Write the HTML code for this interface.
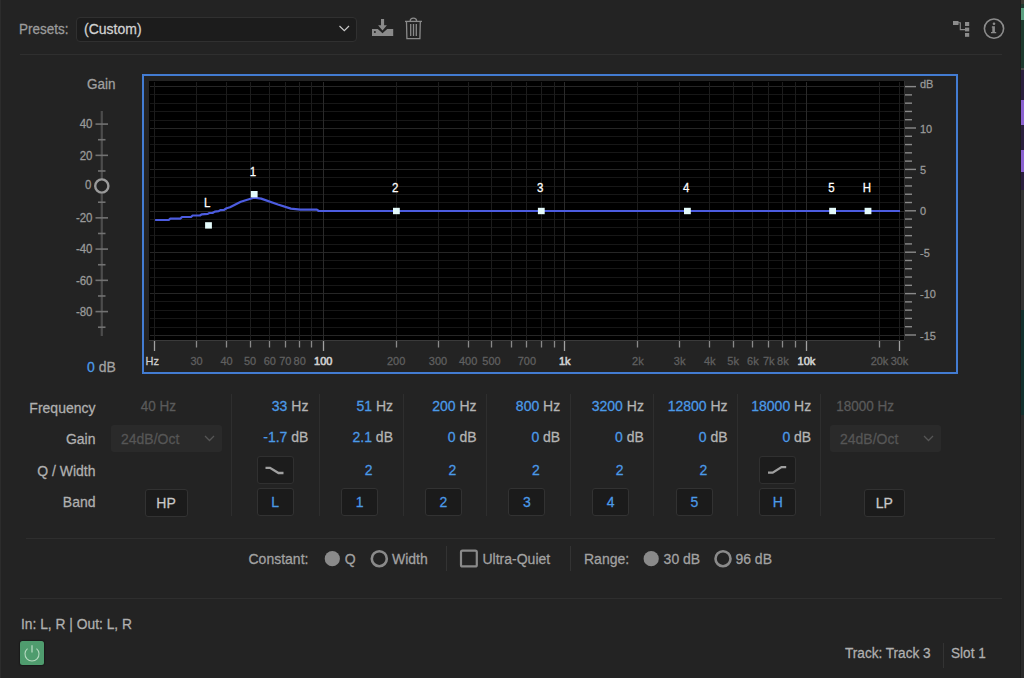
<!DOCTYPE html>
<html><head><meta charset="utf-8"><style>
html,body{margin:0;padding:0;}
body{width:1024px;height:678px;background:#232323;position:relative;overflow:hidden;font-family:"Liberation Sans", sans-serif;}
.t{position:absolute;white-space:nowrap;-webkit-text-stroke:0.25px currentColor;transform:scaleY(1.07);}
svg{position:absolute;left:0;top:0;}
</style></head><body>
<svg width="1024" height="678" viewBox="0 0 1024 678"><rect x="143" y="75" width="814" height="298" fill="none" stroke="#437cd2" stroke-width="2"/><rect x="149" y="81" width="755" height="259.5" fill="#000"/><rect x="149" y="340" width="755" height="1" fill="#3a3a3a"/><line x1="150" x2="904" y1="86.5" y2="86.5" stroke="#262626" stroke-width="1"/><line x1="150" x2="904" y1="94.5" y2="94.5" stroke="#171717" stroke-width="1"/><line x1="150" x2="904" y1="103.5" y2="103.5" stroke="#171717" stroke-width="1"/><line x1="150" x2="904" y1="111.5" y2="111.5" stroke="#171717" stroke-width="1"/><line x1="150" x2="904" y1="120.5" y2="120.5" stroke="#171717" stroke-width="1"/><line x1="150" x2="904" y1="128.5" y2="128.5" stroke="#262626" stroke-width="1"/><line x1="150" x2="904" y1="136.5" y2="136.5" stroke="#171717" stroke-width="1"/><line x1="150" x2="904" y1="144.5" y2="144.5" stroke="#171717" stroke-width="1"/><line x1="150" x2="904" y1="152.5" y2="152.5" stroke="#171717" stroke-width="1"/><line x1="150" x2="904" y1="161.5" y2="161.5" stroke="#171717" stroke-width="1"/><line x1="150" x2="904" y1="169.5" y2="169.5" stroke="#262626" stroke-width="1"/><line x1="150" x2="904" y1="177.5" y2="177.5" stroke="#171717" stroke-width="1"/><line x1="150" x2="904" y1="186.5" y2="186.5" stroke="#171717" stroke-width="1"/><line x1="150" x2="904" y1="194.5" y2="194.5" stroke="#171717" stroke-width="1"/><line x1="150" x2="904" y1="202.5" y2="202.5" stroke="#171717" stroke-width="1"/><line x1="150" x2="904" y1="211.5" y2="211.5" stroke="#262626" stroke-width="1"/><line x1="150" x2="904" y1="219.5" y2="219.5" stroke="#171717" stroke-width="1"/><line x1="150" x2="904" y1="227.5" y2="227.5" stroke="#171717" stroke-width="1"/><line x1="150" x2="904" y1="235.5" y2="235.5" stroke="#171717" stroke-width="1"/><line x1="150" x2="904" y1="244.5" y2="244.5" stroke="#171717" stroke-width="1"/><line x1="150" x2="904" y1="252.5" y2="252.5" stroke="#262626" stroke-width="1"/><line x1="150" x2="904" y1="260.5" y2="260.5" stroke="#171717" stroke-width="1"/><line x1="150" x2="904" y1="268.5" y2="268.5" stroke="#171717" stroke-width="1"/><line x1="150" x2="904" y1="277.5" y2="277.5" stroke="#171717" stroke-width="1"/><line x1="150" x2="904" y1="285.5" y2="285.5" stroke="#171717" stroke-width="1"/><line x1="150" x2="904" y1="293.5" y2="293.5" stroke="#262626" stroke-width="1"/><line x1="150" x2="904" y1="301.5" y2="301.5" stroke="#171717" stroke-width="1"/><line x1="150" x2="904" y1="310.5" y2="310.5" stroke="#171717" stroke-width="1"/><line x1="150" x2="904" y1="318.5" y2="318.5" stroke="#171717" stroke-width="1"/><line x1="150" x2="904" y1="327.5" y2="327.5" stroke="#171717" stroke-width="1"/><line x1="150" x2="904" y1="335.5" y2="335.5" stroke="#262626" stroke-width="1"/><line x1="154.5" x2="154.5" y1="82" y2="340" stroke="#1c1c1c" stroke-width="1"/><line x1="196.5" x2="196.5" y1="82" y2="340" stroke="#1c1c1c" stroke-width="1"/><line x1="226.5" x2="226.5" y1="82" y2="340" stroke="#1c1c1c" stroke-width="1"/><line x1="250.5" x2="250.5" y1="82" y2="340" stroke="#1c1c1c" stroke-width="1"/><line x1="269.5" x2="269.5" y1="82" y2="340" stroke="#1c1c1c" stroke-width="1"/><line x1="285.5" x2="285.5" y1="82" y2="340" stroke="#1c1c1c" stroke-width="1"/><line x1="299.5" x2="299.5" y1="82" y2="340" stroke="#1c1c1c" stroke-width="1"/><line x1="311.5" x2="311.5" y1="82" y2="340" stroke="#1c1c1c" stroke-width="1"/><line x1="323.5" x2="323.5" y1="82" y2="340" stroke="#2a2a2a" stroke-width="1"/><line x1="396.5" x2="396.5" y1="82" y2="340" stroke="#1c1c1c" stroke-width="1"/><line x1="438.5" x2="438.5" y1="82" y2="340" stroke="#1c1c1c" stroke-width="1"/><line x1="468.5" x2="468.5" y1="82" y2="340" stroke="#1c1c1c" stroke-width="1"/><line x1="491.5" x2="491.5" y1="82" y2="340" stroke="#1c1c1c" stroke-width="1"/><line x1="511.5" x2="511.5" y1="82" y2="340" stroke="#1c1c1c" stroke-width="1"/><line x1="526.5" x2="526.5" y1="82" y2="340" stroke="#1c1c1c" stroke-width="1"/><line x1="541.5" x2="541.5" y1="82" y2="340" stroke="#1c1c1c" stroke-width="1"/><line x1="554.5" x2="554.5" y1="82" y2="340" stroke="#1c1c1c" stroke-width="1"/><line x1="564.5" x2="564.5" y1="82" y2="340" stroke="#2a2a2a" stroke-width="1"/><line x1="637.5" x2="637.5" y1="82" y2="340" stroke="#1c1c1c" stroke-width="1"/><line x1="679.5" x2="679.5" y1="82" y2="340" stroke="#1c1c1c" stroke-width="1"/><line x1="709.5" x2="709.5" y1="82" y2="340" stroke="#1c1c1c" stroke-width="1"/><line x1="733.5" x2="733.5" y1="82" y2="340" stroke="#1c1c1c" stroke-width="1"/><line x1="752.5" x2="752.5" y1="82" y2="340" stroke="#1c1c1c" stroke-width="1"/><line x1="768.5" x2="768.5" y1="82" y2="340" stroke="#1c1c1c" stroke-width="1"/><line x1="782.5" x2="782.5" y1="82" y2="340" stroke="#1c1c1c" stroke-width="1"/><line x1="795.5" x2="795.5" y1="82" y2="340" stroke="#1c1c1c" stroke-width="1"/><line x1="806.5" x2="806.5" y1="82" y2="340" stroke="#2a2a2a" stroke-width="1"/><line x1="879.5" x2="879.5" y1="82" y2="340" stroke="#1c1c1c" stroke-width="1"/><line x1="899.5" x2="899.5" y1="82" y2="340" stroke="#1c1c1c" stroke-width="1"/><line x1="904.5" x2="904.5" y1="81" y2="340" stroke="#2e2e2e" stroke-width="1"/><line x1="154.5" x2="154.5" y1="341" y2="351" stroke="#a2a2a2" stroke-width="1.3"/><line x1="196.5" x2="196.5" y1="341" y2="347.5" stroke="#8a8a8a" stroke-width="1.3"/><line x1="226.5" x2="226.5" y1="341" y2="347.5" stroke="#8a8a8a" stroke-width="1.3"/><line x1="250.5" x2="250.5" y1="341" y2="347.5" stroke="#8a8a8a" stroke-width="1.3"/><line x1="269.5" x2="269.5" y1="341" y2="347.5" stroke="#8a8a8a" stroke-width="1.3"/><line x1="285.5" x2="285.5" y1="341" y2="347.5" stroke="#8a8a8a" stroke-width="1.3"/><line x1="299.5" x2="299.5" y1="341" y2="347.5" stroke="#8a8a8a" stroke-width="1.3"/><line x1="311.5" x2="311.5" y1="341" y2="347.5" stroke="#8a8a8a" stroke-width="1.3"/><line x1="323.5" x2="323.5" y1="341" y2="351" stroke="#a2a2a2" stroke-width="1.3"/><line x1="396.5" x2="396.5" y1="341" y2="347.5" stroke="#8a8a8a" stroke-width="1.3"/><line x1="438.5" x2="438.5" y1="341" y2="347.5" stroke="#8a8a8a" stroke-width="1.3"/><line x1="468.5" x2="468.5" y1="341" y2="347.5" stroke="#8a8a8a" stroke-width="1.3"/><line x1="491.5" x2="491.5" y1="341" y2="347.5" stroke="#8a8a8a" stroke-width="1.3"/><line x1="511.5" x2="511.5" y1="341" y2="347.5" stroke="#8a8a8a" stroke-width="1.3"/><line x1="526.5" x2="526.5" y1="341" y2="347.5" stroke="#8a8a8a" stroke-width="1.3"/><line x1="541.5" x2="541.5" y1="341" y2="347.5" stroke="#8a8a8a" stroke-width="1.3"/><line x1="554.5" x2="554.5" y1="341" y2="347.5" stroke="#8a8a8a" stroke-width="1.3"/><line x1="564.5" x2="564.5" y1="341" y2="351" stroke="#a2a2a2" stroke-width="1.3"/><line x1="637.5" x2="637.5" y1="341" y2="347.5" stroke="#8a8a8a" stroke-width="1.3"/><line x1="679.5" x2="679.5" y1="341" y2="347.5" stroke="#8a8a8a" stroke-width="1.3"/><line x1="709.5" x2="709.5" y1="341" y2="347.5" stroke="#8a8a8a" stroke-width="1.3"/><line x1="733.5" x2="733.5" y1="341" y2="347.5" stroke="#8a8a8a" stroke-width="1.3"/><line x1="752.5" x2="752.5" y1="341" y2="347.5" stroke="#8a8a8a" stroke-width="1.3"/><line x1="768.5" x2="768.5" y1="341" y2="347.5" stroke="#8a8a8a" stroke-width="1.3"/><line x1="782.5" x2="782.5" y1="341" y2="347.5" stroke="#8a8a8a" stroke-width="1.3"/><line x1="795.5" x2="795.5" y1="341" y2="347.5" stroke="#8a8a8a" stroke-width="1.3"/><line x1="806.5" x2="806.5" y1="341" y2="351" stroke="#a2a2a2" stroke-width="1.3"/><line x1="879.5" x2="879.5" y1="341" y2="347.5" stroke="#8a8a8a" stroke-width="1.3"/><line x1="899.5" x2="899.5" y1="341" y2="351" stroke="#a2a2a2" stroke-width="1.3"/><rect x="905" y="85.90" width="11" height="1.4" fill="#8a8a8a"/><rect x="905" y="94.18" width="7" height="1.4" fill="#8a8a8a"/><rect x="905" y="102.46" width="7" height="1.4" fill="#8a8a8a"/><rect x="905" y="110.74" width="7" height="1.4" fill="#8a8a8a"/><rect x="905" y="119.02" width="7" height="1.4" fill="#8a8a8a"/><rect x="905" y="127.30" width="11" height="1.4" fill="#8a8a8a"/><rect x="905" y="135.58" width="7" height="1.4" fill="#8a8a8a"/><rect x="905" y="143.86" width="7" height="1.4" fill="#8a8a8a"/><rect x="905" y="152.14" width="7" height="1.4" fill="#8a8a8a"/><rect x="905" y="160.42" width="7" height="1.4" fill="#8a8a8a"/><rect x="905" y="168.70" width="11" height="1.4" fill="#8a8a8a"/><rect x="905" y="176.98" width="7" height="1.4" fill="#8a8a8a"/><rect x="905" y="185.26" width="7" height="1.4" fill="#8a8a8a"/><rect x="905" y="193.54" width="7" height="1.4" fill="#8a8a8a"/><rect x="905" y="201.82" width="7" height="1.4" fill="#8a8a8a"/><rect x="905" y="210.10" width="11" height="1.4" fill="#8a8a8a"/><rect x="905" y="218.38" width="7" height="1.4" fill="#8a8a8a"/><rect x="905" y="226.66" width="7" height="1.4" fill="#8a8a8a"/><rect x="905" y="234.94" width="7" height="1.4" fill="#8a8a8a"/><rect x="905" y="243.22" width="7" height="1.4" fill="#8a8a8a"/><rect x="905" y="251.50" width="11" height="1.4" fill="#8a8a8a"/><rect x="905" y="259.78" width="7" height="1.4" fill="#8a8a8a"/><rect x="905" y="268.06" width="7" height="1.4" fill="#8a8a8a"/><rect x="905" y="276.34" width="7" height="1.4" fill="#8a8a8a"/><rect x="905" y="284.62" width="7" height="1.4" fill="#8a8a8a"/><rect x="905" y="292.90" width="11" height="1.4" fill="#8a8a8a"/><rect x="905" y="301.18" width="7" height="1.4" fill="#8a8a8a"/><rect x="905" y="309.46" width="7" height="1.4" fill="#8a8a8a"/><rect x="905" y="317.74" width="7" height="1.4" fill="#8a8a8a"/><rect x="905" y="326.02" width="7" height="1.4" fill="#8a8a8a"/><rect x="905" y="334.30" width="11" height="1.4" fill="#8a8a8a"/><polyline points="155.1,220 168.75,220 170.3,218.6 180.5,218.6 182,217 191,217 192.6,215.5 200,215.5 201.6,214.3 207.8,213.9 209.4,213 212.5,213 214.8,211.6 218.75,211.2 220.3,210.2 224.2,209.8 226.6,208.3 230,207.3 240.8,201.8 253.8,197.7 261.2,198.6 277.9,204.5 290.9,208.6 300.2,209.7 316.9,209.7 318.7,211 900,211" fill="none" stroke="#4c5ce0" stroke-width="2.2" stroke-linejoin="round"/><rect x="205.10" y="222.20" width="6.8" height="6.4" fill="#e4fafa"/><rect x="250.80" y="191.00" width="6.8" height="6.4" fill="#e4fafa"/><rect x="393.00" y="207.80" width="6.8" height="6.4" fill="#e4fafa"/><rect x="537.90" y="207.80" width="6.8" height="6.4" fill="#e4fafa"/><rect x="684.00" y="207.80" width="6.8" height="6.4" fill="#e4fafa"/><rect x="829.20" y="207.80" width="6.8" height="6.4" fill="#e4fafa"/><rect x="864.60" y="207.80" width="6.8" height="6.4" fill="#e4fafa"/><rect x="100.7" y="111" width="2.2" height="69" fill="#4c4c4c"/><rect x="100.7" y="194" width="2.2" height="142" fill="#4c4c4c"/><rect x="95.5" y="123.30" width="12.5" height="1.6" fill="#727272"/><rect x="98" y="138.92" width="7.5" height="1.6" fill="#727272"/><rect x="95.5" y="154.55" width="12.5" height="1.6" fill="#727272"/><rect x="98" y="170.17" width="7.5" height="1.6" fill="#727272"/><rect x="98" y="201.42" width="7.5" height="1.6" fill="#727272"/><rect x="95.5" y="217.05" width="12.5" height="1.6" fill="#727272"/><rect x="98" y="232.67" width="7.5" height="1.6" fill="#727272"/><rect x="95.5" y="248.30" width="12.5" height="1.6" fill="#727272"/><rect x="98" y="263.93" width="7.5" height="1.6" fill="#727272"/><rect x="95.5" y="279.55" width="12.5" height="1.6" fill="#727272"/><rect x="98" y="295.18" width="7.5" height="1.6" fill="#727272"/><rect x="95.5" y="310.80" width="12.5" height="1.6" fill="#727272"/><rect x="98" y="326.43" width="7.5" height="1.6" fill="#727272"/><circle cx="101.8" cy="186" r="6.6" fill="none" stroke="#9a9a9a" stroke-width="2.4"/></svg>
<div class="t" style="left:19px;top:22.57px;font-size:13.5px;line-height:13.5px;color:#9c9c9c;transform-origin:0 11.43px;">Presets:</div>
<div style="position:absolute;left:75.5px;top:16.5px;width:281px;height:25px;box-sizing:border-box;background:#1c1c1c;border:1px solid #303030;border-radius:4px"></div>
<div class="t" style="left:84px;top:22.15px;font-size:14px;line-height:14px;color:#d2d2d2;transform-origin:0 11.85px;">(Custom)</div>
<div style="position:absolute;left:20px;top:54px;width:982px;height:1px;background:#2f2f2f"></div>
<div class="t" style="left:-484.5px;width:600px;text-align:right;top:77.57px;font-size:13.5px;line-height:13.5px;color:#a0a0a0;transform-origin:0 11.43px;">Gain</div>
<div class="t" style="left:-507.5px;width:600px;text-align:right;top:119.37px;font-size:11.5px;line-height:11.5px;color:#9a9a9a;transform-origin:0 9.73px;">40</div>
<div class="t" style="left:-507.5px;width:600px;text-align:right;top:150.62px;font-size:11.5px;line-height:11.5px;color:#9a9a9a;transform-origin:0 9.73px;">20</div>
<div class="t" style="left:-507.5px;width:600px;text-align:right;top:213.12px;font-size:11.5px;line-height:11.5px;color:#9a9a9a;transform-origin:0 9.73px;">-20</div>
<div class="t" style="left:-507.5px;width:600px;text-align:right;top:244.37px;font-size:11.5px;line-height:11.5px;color:#9a9a9a;transform-origin:0 9.73px;">-40</div>
<div class="t" style="left:-507.5px;width:600px;text-align:right;top:275.62px;font-size:11.5px;line-height:11.5px;color:#9a9a9a;transform-origin:0 9.73px;">-60</div>
<div class="t" style="left:-507.5px;width:600px;text-align:right;top:306.87px;font-size:11.5px;line-height:11.5px;color:#9a9a9a;transform-origin:0 9.73px;">-80</div>
<div class="t" style="left:-508.5px;width:600px;text-align:right;top:180.27px;font-size:11.5px;line-height:11.5px;color:#9a9a9a;transform-origin:0 9.73px;">0</div>
<div class="t" style="left:87px;top:360.15px;font-size:14px;line-height:14px;color:#a2a2a2;transform-origin:0 11.85px;"><span style="color:#4b9ae8">0</span> dB</div>
<div class="t" style="left:145.5px;top:355.69px;font-size:11px;line-height:11px;color:#d0d0d0;transform-origin:0 9.31px;">Hz</div>
<div class="t" style="left:-103.5px;width:600px;text-align:center;top:355.69px;font-size:11px;line-height:11px;color:#606060;transform-origin:0 9.31px;">30</div>
<div class="t" style="left:-73.4px;width:600px;text-align:center;top:355.69px;font-size:11px;line-height:11px;color:#606060;transform-origin:0 9.31px;">40</div>
<div class="t" style="left:-50px;width:600px;text-align:center;top:355.69px;font-size:11px;line-height:11px;color:#606060;transform-origin:0 9.31px;">50</div>
<div class="t" style="left:-30.19999999999999px;width:600px;text-align:center;top:355.69px;font-size:11px;line-height:11px;color:#606060;transform-origin:0 9.31px;">60</div>
<div class="t" style="left:-14.699999999999989px;width:600px;text-align:center;top:355.69px;font-size:11px;line-height:11px;color:#606060;transform-origin:0 9.31px;">70</div>
<div class="t" style="left:-0.30000000000001137px;width:600px;text-align:center;top:355.69px;font-size:11px;line-height:11px;color:#606060;transform-origin:0 9.31px;">80</div>
<div class="t" style="left:23.30000000000001px;width:600px;text-align:center;top:355.69px;font-size:11px;line-height:11px;color:#d0d0d0;transform-origin:0 9.31px;-webkit-text-stroke:0.6px currentColor;">100</div>
<div class="t" style="left:96.19999999999999px;width:600px;text-align:center;top:355.69px;font-size:11px;line-height:11px;color:#606060;transform-origin:0 9.31px;">200</div>
<div class="t" style="left:138px;width:600px;text-align:center;top:355.69px;font-size:11px;line-height:11px;color:#606060;transform-origin:0 9.31px;">300</div>
<div class="t" style="left:168.10000000000002px;width:600px;text-align:center;top:355.69px;font-size:11px;line-height:11px;color:#606060;transform-origin:0 9.31px;">400</div>
<div class="t" style="left:191.5px;width:600px;text-align:center;top:355.69px;font-size:11px;line-height:11px;color:#606060;transform-origin:0 9.31px;">500</div>
<div class="t" style="left:226.89999999999998px;width:600px;text-align:center;top:355.69px;font-size:11px;line-height:11px;color:#606060;transform-origin:0 9.31px;">700</div>
<div class="t" style="left:264.70000000000005px;width:600px;text-align:center;top:355.69px;font-size:11px;line-height:11px;color:#d0d0d0;transform-origin:0 9.31px;-webkit-text-stroke:0.6px currentColor;">1k</div>
<div class="t" style="left:337.9px;width:600px;text-align:center;top:355.69px;font-size:11px;line-height:11px;color:#606060;transform-origin:0 9.31px;">2k</div>
<div class="t" style="left:379.6px;width:600px;text-align:center;top:355.69px;font-size:11px;line-height:11px;color:#606060;transform-origin:0 9.31px;">3k</div>
<div class="t" style="left:409.70000000000005px;width:600px;text-align:center;top:355.69px;font-size:11px;line-height:11px;color:#606060;transform-origin:0 9.31px;">4k</div>
<div class="t" style="left:433.1px;width:600px;text-align:center;top:355.69px;font-size:11px;line-height:11px;color:#606060;transform-origin:0 9.31px;">5k</div>
<div class="t" style="left:452.9px;width:600px;text-align:center;top:355.69px;font-size:11px;line-height:11px;color:#606060;transform-origin:0 9.31px;">6k</div>
<div class="t" style="left:468.70000000000005px;width:600px;text-align:center;top:355.69px;font-size:11px;line-height:11px;color:#606060;transform-origin:0 9.31px;">7k</div>
<div class="t" style="left:482.9px;width:600px;text-align:center;top:355.69px;font-size:11px;line-height:11px;color:#606060;transform-origin:0 9.31px;">8k</div>
<div class="t" style="left:506.4px;width:600px;text-align:center;top:355.69px;font-size:11px;line-height:11px;color:#d0d0d0;transform-origin:0 9.31px;-webkit-text-stroke:0.6px currentColor;">10k</div>
<div class="t" style="left:579.5px;width:600px;text-align:center;top:355.69px;font-size:11px;line-height:11px;color:#606060;transform-origin:0 9.31px;">20k</div>
<div class="t" style="left:599.5px;width:600px;text-align:center;top:355.69px;font-size:11px;line-height:11px;color:#606060;transform-origin:0 9.31px;">30k</div>
<div class="t" style="left:920px;top:79.29px;font-size:11px;line-height:11px;color:#9a9a9a;transform-origin:0 9.31px;">dB</div>
<div class="t" style="left:920px;top:123.69px;font-size:11px;line-height:11px;color:#9a9a9a;transform-origin:0 9.31px;">10</div>
<div class="t" style="left:920px;top:165.09px;font-size:11px;line-height:11px;color:#9a9a9a;transform-origin:0 9.31px;">5</div>
<div class="t" style="left:920px;top:206.49px;font-size:11px;line-height:11px;color:#9a9a9a;transform-origin:0 9.31px;">0</div>
<div class="t" style="left:920px;top:247.89px;font-size:11px;line-height:11px;color:#9a9a9a;transform-origin:0 9.31px;">-5</div>
<div class="t" style="left:920px;top:289.29px;font-size:11px;line-height:11px;color:#9a9a9a;transform-origin:0 9.31px;">-10</div>
<div class="t" style="left:920px;top:330.69px;font-size:11px;line-height:11px;color:#9a9a9a;transform-origin:0 9.31px;">-15</div>
<div class="t" style="left:-92.69999999999999px;width:600px;text-align:center;top:197.77px;font-size:11.5px;line-height:11.5px;color:#ffffff;transform-origin:0 9.73px;">L</div>
<div class="t" style="left:-47.0px;width:600px;text-align:center;top:166.57px;font-size:11.5px;line-height:11.5px;color:#ffffff;transform-origin:0 9.73px;">1</div>
<div class="t" style="left:95.19999999999999px;width:600px;text-align:center;top:183.37px;font-size:11.5px;line-height:11.5px;color:#ffffff;transform-origin:0 9.73px;">2</div>
<div class="t" style="left:240.0999999999999px;width:600px;text-align:center;top:183.37px;font-size:11.5px;line-height:11.5px;color:#ffffff;transform-origin:0 9.73px;">3</div>
<div class="t" style="left:386.19999999999993px;width:600px;text-align:center;top:183.37px;font-size:11.5px;line-height:11.5px;color:#ffffff;transform-origin:0 9.73px;">4</div>
<div class="t" style="left:531.4px;width:600px;text-align:center;top:183.37px;font-size:11.5px;line-height:11.5px;color:#ffffff;transform-origin:0 9.73px;">5</div>
<div class="t" style="left:566.8px;width:600px;text-align:center;top:183.37px;font-size:11.5px;line-height:11.5px;color:#ffffff;transform-origin:0 9.73px;">H</div>
<div class="t" style="left:-504.5px;width:600px;text-align:right;top:400.65px;font-size:14px;line-height:14px;color:#b0b0b0;transform-origin:0 11.85px;">Frequency</div>
<div class="t" style="left:-504.5px;width:600px;text-align:right;top:431.95px;font-size:14px;line-height:14px;color:#b0b0b0;transform-origin:0 11.85px;">Gain</div>
<div class="t" style="left:-504.5px;width:600px;text-align:right;top:463.65px;font-size:14px;line-height:14px;color:#b0b0b0;transform-origin:0 11.85px;">Q / Width</div>
<div class="t" style="left:-504.5px;width:600px;text-align:right;top:494.55px;font-size:14px;line-height:14px;color:#b0b0b0;transform-origin:0 11.85px;">Band</div>
<div class="t" style="left:-424px;width:600px;text-align:right;top:399.57px;font-size:13.5px;line-height:13.5px;color:#5a5a5a;transform-origin:0 11.43px;">40 Hz</div>
<div style="position:absolute;left:110.5px;top:424.5px;width:111.5px;height:27px;background:#2a2a2a;border-radius:3px"></div>
<div class="t" style="left:121px;top:431.95px;font-size:14px;line-height:14px;color:#565656;transform-origin:0 11.85px;">24dB/Oct</div>
<div style="position:absolute;left:144.5px;top:489px;width:43px;height:27.5px;box-sizing:border-box;background:#1b1b1b;border:1px solid #323232;border-radius:3px"></div>
<div class="t" style="left:-134px;width:600px;text-align:center;top:496.15px;font-size:14px;line-height:14px;color:#c8c8c8;transform-origin:0 11.85px;">HP</div>
<div class="t" style="left:294px;width:600px;text-align:right;top:399.57px;font-size:13.5px;line-height:13.5px;color:#5a5a5a;transform-origin:0 11.43px;">18000 Hz</div>
<div style="position:absolute;left:829.5px;top:425px;width:111px;height:27px;background:#2a2a2a;border-radius:3px"></div>
<div class="t" style="left:840px;top:431.95px;font-size:14px;line-height:14px;color:#565656;transform-origin:0 11.85px;">24dB/Oct</div>
<div style="position:absolute;left:864.05px;top:489px;width:40.5px;height:27.5px;box-sizing:border-box;background:#1b1b1b;border:1px solid #323232;border-radius:3px"></div>
<div class="t" style="left:584.3px;width:600px;text-align:center;top:496.15px;font-size:14px;line-height:14px;color:#c8c8c8;transform-origin:0 11.85px;">LP</div>
<div style="position:absolute;left:231px;top:394px;width:1px;height:122px;background:#2e2e2e"></div>
<div style="position:absolute;left:319px;top:394px;width:1px;height:122px;background:#2e2e2e"></div>
<div style="position:absolute;left:402.5px;top:394px;width:1px;height:122px;background:#2e2e2e"></div>
<div style="position:absolute;left:486px;top:394px;width:1px;height:122px;background:#2e2e2e"></div>
<div style="position:absolute;left:569.5px;top:394px;width:1px;height:122px;background:#2e2e2e"></div>
<div style="position:absolute;left:653px;top:394px;width:1px;height:122px;background:#2e2e2e"></div>
<div style="position:absolute;left:736.5px;top:394px;width:1px;height:122px;background:#2e2e2e"></div>
<div style="position:absolute;left:820px;top:394px;width:1px;height:122px;background:#2e2e2e"></div>
<div class="t" style="left:-291.59999999999997px;width:600px;text-align:right;top:399.15px;font-size:14px;line-height:14px;color:#b4b4b4;transform-origin:0 11.85px;"><span style="color:#4b9ae8">33</span> Hz</div>
<div class="t" style="left:-291.59999999999997px;width:600px;text-align:right;top:430.15px;font-size:14px;line-height:14px;color:#b4b4b4;transform-origin:0 11.85px;"><span style="color:#4b9ae8">-1.7</span> dB</div>
<div style="position:absolute;left:256.6px;top:456.2px;width:37px;height:28px;box-sizing:border-box;background:#1c1c1c;border:1px solid #303030;border-radius:3px"></div>
<div style="position:absolute;left:256.6px;top:487.5px;width:37px;height:28px;box-sizing:border-box;background:#1b1b1b;border:1px solid #323232;border-radius:3px"></div>
<div class="t" style="left:-24.899999999999977px;width:600px;text-align:center;top:494.65px;font-size:14px;line-height:14px;color:#4b9ae8;transform-origin:0 11.85px;">L</div>
<div class="t" style="left:-207.0px;width:600px;text-align:right;top:399.15px;font-size:14px;line-height:14px;color:#b4b4b4;transform-origin:0 11.85px;"><span style="color:#4b9ae8">51</span> Hz</div>
<div class="t" style="left:-207.0px;width:600px;text-align:right;top:430.15px;font-size:14px;line-height:14px;color:#b4b4b4;transform-origin:0 11.85px;"><span style="color:#4b9ae8">2.1</span> dB</div>
<div class="t" style="left:68.69999999999999px;width:600px;text-align:center;top:462.95px;font-size:14px;line-height:14px;color:#4b9ae8;transform-origin:0 11.85px;">2</div>
<div style="position:absolute;left:341.2px;top:487.5px;width:37px;height:28px;box-sizing:border-box;background:#1b1b1b;border:1px solid #323232;border-radius:3px"></div>
<div class="t" style="left:59.69999999999999px;width:600px;text-align:center;top:494.65px;font-size:14px;line-height:14px;color:#4b9ae8;transform-origin:0 11.85px;">1</div>
<div class="t" style="left:-123.39999999999998px;width:600px;text-align:right;top:399.15px;font-size:14px;line-height:14px;color:#b4b4b4;transform-origin:0 11.85px;"><span style="color:#4b9ae8">200</span> Hz</div>
<div class="t" style="left:-123.39999999999998px;width:600px;text-align:right;top:430.15px;font-size:14px;line-height:14px;color:#b4b4b4;transform-origin:0 11.85px;"><span style="color:#4b9ae8">0</span> dB</div>
<div class="t" style="left:152.3px;width:600px;text-align:center;top:462.95px;font-size:14px;line-height:14px;color:#4b9ae8;transform-origin:0 11.85px;">2</div>
<div style="position:absolute;left:424.8px;top:487.5px;width:37px;height:28px;box-sizing:border-box;background:#1b1b1b;border:1px solid #323232;border-radius:3px"></div>
<div class="t" style="left:143.3px;width:600px;text-align:center;top:494.65px;font-size:14px;line-height:14px;color:#4b9ae8;transform-origin:0 11.85px;">2</div>
<div class="t" style="left:-39.80000000000007px;width:600px;text-align:right;top:399.15px;font-size:14px;line-height:14px;color:#b4b4b4;transform-origin:0 11.85px;"><span style="color:#4b9ae8">800</span> Hz</div>
<div class="t" style="left:-39.80000000000007px;width:600px;text-align:right;top:430.15px;font-size:14px;line-height:14px;color:#b4b4b4;transform-origin:0 11.85px;"><span style="color:#4b9ae8">0</span> dB</div>
<div class="t" style="left:235.89999999999998px;width:600px;text-align:center;top:462.95px;font-size:14px;line-height:14px;color:#4b9ae8;transform-origin:0 11.85px;">2</div>
<div style="position:absolute;left:508.4px;top:487.5px;width:37px;height:28px;box-sizing:border-box;background:#1b1b1b;border:1px solid #323232;border-radius:3px"></div>
<div class="t" style="left:226.89999999999998px;width:600px;text-align:center;top:494.65px;font-size:14px;line-height:14px;color:#4b9ae8;transform-origin:0 11.85px;">3</div>
<div class="t" style="left:43.89999999999998px;width:600px;text-align:right;top:399.15px;font-size:14px;line-height:14px;color:#b4b4b4;transform-origin:0 11.85px;"><span style="color:#4b9ae8">3200</span> Hz</div>
<div class="t" style="left:43.89999999999998px;width:600px;text-align:right;top:430.15px;font-size:14px;line-height:14px;color:#b4b4b4;transform-origin:0 11.85px;"><span style="color:#4b9ae8">0</span> dB</div>
<div class="t" style="left:319.6px;width:600px;text-align:center;top:462.95px;font-size:14px;line-height:14px;color:#4b9ae8;transform-origin:0 11.85px;">2</div>
<div style="position:absolute;left:592.1px;top:487.5px;width:37px;height:28px;box-sizing:border-box;background:#1b1b1b;border:1px solid #323232;border-radius:3px"></div>
<div class="t" style="left:310.6px;width:600px;text-align:center;top:494.65px;font-size:14px;line-height:14px;color:#4b9ae8;transform-origin:0 11.85px;">4</div>
<div class="t" style="left:127.59999999999991px;width:600px;text-align:right;top:399.15px;font-size:14px;line-height:14px;color:#b4b4b4;transform-origin:0 11.85px;"><span style="color:#4b9ae8">12800</span> Hz</div>
<div class="t" style="left:127.59999999999991px;width:600px;text-align:right;top:430.15px;font-size:14px;line-height:14px;color:#b4b4b4;transform-origin:0 11.85px;"><span style="color:#4b9ae8">0</span> dB</div>
<div class="t" style="left:403.29999999999995px;width:600px;text-align:center;top:462.95px;font-size:14px;line-height:14px;color:#4b9ae8;transform-origin:0 11.85px;">2</div>
<div style="position:absolute;left:675.8px;top:487.5px;width:37px;height:28px;box-sizing:border-box;background:#1b1b1b;border:1px solid #323232;border-radius:3px"></div>
<div class="t" style="left:394.29999999999995px;width:600px;text-align:center;top:494.65px;font-size:14px;line-height:14px;color:#4b9ae8;transform-origin:0 11.85px;">5</div>
<div class="t" style="left:211.19999999999993px;width:600px;text-align:right;top:399.15px;font-size:14px;line-height:14px;color:#b4b4b4;transform-origin:0 11.85px;"><span style="color:#4b9ae8">18000</span> Hz</div>
<div class="t" style="left:211.19999999999993px;width:600px;text-align:right;top:430.15px;font-size:14px;line-height:14px;color:#b4b4b4;transform-origin:0 11.85px;"><span style="color:#4b9ae8">0</span> dB</div>
<div style="position:absolute;left:759.4px;top:456.2px;width:37px;height:28px;box-sizing:border-box;background:#1c1c1c;border:1px solid #303030;border-radius:3px"></div>
<div style="position:absolute;left:759.4px;top:487.5px;width:37px;height:28px;box-sizing:border-box;background:#1b1b1b;border:1px solid #323232;border-radius:3px"></div>
<div class="t" style="left:477.9px;width:600px;text-align:center;top:494.65px;font-size:14px;line-height:14px;color:#4b9ae8;transform-origin:0 11.85px;">H</div>
<div style="position:absolute;left:26px;top:537.5px;width:969px;height:1px;background:#2e2e2e"></div>
<div class="t" style="left:248.5px;top:552.25px;font-size:14px;line-height:14px;color:#a2a2a2;transform-origin:0 11.85px;">Constant:</div>
<div class="t" style="left:344.7px;top:552.25px;font-size:14px;line-height:14px;color:#a2a2a2;transform-origin:0 11.85px;">Q</div>
<div class="t" style="left:392px;top:552.25px;font-size:14px;line-height:14px;color:#a2a2a2;transform-origin:0 11.85px;">Width</div>
<div style="position:absolute;left:445.5px;top:546px;width:1px;height:25px;background:#333"></div>
<div class="t" style="left:482.5px;top:552.25px;font-size:14px;line-height:14px;color:#a2a2a2;transform-origin:0 11.85px;">Ultra-Quiet</div>
<div style="position:absolute;left:569.5px;top:546px;width:1px;height:25px;background:#333"></div>
<div class="t" style="left:584px;top:552.25px;font-size:14px;line-height:14px;color:#a2a2a2;transform-origin:0 11.85px;">Range:</div>
<div class="t" style="left:663.6px;top:552.25px;font-size:14px;line-height:14px;color:#a2a2a2;transform-origin:0 11.85px;">30 dB</div>
<div class="t" style="left:735.4px;top:552.25px;font-size:14px;line-height:14px;color:#a2a2a2;transform-origin:0 11.85px;">96 dB</div>
<div style="position:absolute;left:20px;top:597.5px;width:982px;height:1px;background:#2e2e2e"></div>
<div class="t" style="left:21px;top:617.62px;font-size:13.8px;line-height:13.8px;color:#b0b0b0;transform-origin:0 11.68px;">In: L, R | Out: L, R</div>
<div style="position:absolute;left:19.5px;top:641px;width:24px;height:24px;background:#4f9c6e;border-radius:2.5px;box-shadow:0 0 1px 1px #1a1a1a"></div>
<div class="t" style="left:845px;top:647.09px;font-size:13.6px;line-height:13.6px;color:#b0b0b0;transform-origin:0 11.51px;">Track: Track 3</div>
<div style="position:absolute;left:942.5px;top:643px;width:1px;height:25px;background:#333"></div>
<div class="t" style="left:951px;top:647.09px;font-size:13.6px;line-height:13.6px;color:#b0b0b0;transform-origin:0 11.51px;">Slot 1</div>
<div style="position:absolute;left:1021px;top:0px;width:3px;height:4px;background:#3c3c34"></div>
<div style="position:absolute;left:1021px;top:4px;width:3px;height:64px;background:#1d3a2e"></div>
<div style="position:absolute;left:1021px;top:68px;width:3px;height:2px;background:#4a4a4a"></div>
<div style="position:absolute;left:1021px;top:70px;width:3px;height:120px;background:#2a1f3e"></div>
<div style="position:absolute;left:1021px;top:190px;width:3px;height:120px;background:#333333"></div>
<div style="position:absolute;left:1021px;top:310px;width:3px;height:105px;background:#12302e"></div>
<div style="position:absolute;left:1021px;top:415px;width:3px;height:263px;background:#2a2a2a"></div>
<div style="position:absolute;left:1021px;top:8px;width:3px;height:12px;background:#5aa080"></div>
<div style="position:absolute;left:1021px;top:100px;width:3px;height:25px;background:#8a62d0"></div>
<div style="position:absolute;left:1021px;top:150px;width:3px;height:22px;background:#8a62d0"></div>
<div style="position:absolute;left:1019.5px;top:0px;width:1.5px;height:678px;background:#1c1c1c"></div>
<div style="position:absolute;left:0px;top:0px;width:1px;height:678px;background:#2c2c2c"></div>
<svg width="1024" height="678" viewBox="0 0 1024 678"><polyline points="339.5,26 344.3,30.6 349,26" fill="none" stroke="#c8c8c8" stroke-width="1.2"/><path d="M372,28.9 h5.8 l4.7,4.3 l4.7,-4.3 h6 v7.2 h-21.2 z" fill="#8a8a8a"/><circle cx="374.9" cy="31.9" r="1" fill="#232323"/><path d="M381,19 h3.1 v6.3 h2.8 l-4.4,5.1 l-4.4,-5.1 h2.9 z" fill="#8a8a8a"/><g fill="none" stroke="#8a8a8a" stroke-width="1.3"><path d="M405,21.4 h17"/><path d="M410.2,21 a3.2,2.9 0 0 1 6.4,0"/><path d="M406.5,22 l0.4,16.6 h13 l0.4,-16.6"/><path d="M410.7,24 v12 M413.5,24 v12 M416.3,24 v12"/></g><g fill="#8c8c8c"><rect x="953" y="21" width="5.5" height="4"/><rect x="965" y="22" width="4.2" height="4"/><rect x="965" y="27.6" width="4.2" height="3.8"/><rect x="965" y="33" width="4.2" height="3.8"/></g><path d="M958,22.8 h2.3 v6.8 h5" fill="none" stroke="#8c8c8c" stroke-width="1.1"/><circle cx="994" cy="28.6" r="9.6" fill="none" stroke="#8c8c8c" stroke-width="1.6"/><circle cx="994" cy="23.8" r="1.3" fill="#8c8c8c"/><path d="M992,26.3 h2.9 v5.8 h1.3 v1.2 h-5.2 v-1.2 h1.3 v-4.6 h-0.6 z" fill="#8c8c8c"/><polyline points="205,436 209.5,440.5 214,436" fill="none" stroke="#555" stroke-width="1.3"/><polyline points="924,436 928.5,440.5 933,436" fill="none" stroke="#555" stroke-width="1.3"/><polyline points="265.5,467.8 270,467.8 278.5,473 283.5,473" fill="none" stroke="#a0a0a0" stroke-width="2.3"/><polyline points="768,472.7 772.7,472.7 781.5,467.1 786.2,467.1" fill="none" stroke="#a0a0a0" stroke-width="2.3"/><circle cx="332.3" cy="558.7" r="7.6" fill="#8a8a8a"/><circle cx="379.3" cy="558.7" r="7.5" fill="none" stroke="#8a8a8a" stroke-width="2.6"/><rect x="461" y="550.6" width="15.8" height="15.8" rx="1.5" fill="none" stroke="#8a8a8a" stroke-width="2.2"/><circle cx="651.2" cy="558.7" r="7.6" fill="#8a8a8a"/><circle cx="723" cy="558.7" r="7.5" fill="none" stroke="#8a8a8a" stroke-width="2.6"/><path d="M27.5,648.6 A7,7 0 1 0 36.5,648.6" fill="none" stroke="#b4d8bf" stroke-width="1.1"/><line x1="32" y1="645.3" x2="32" y2="652.6" stroke="#b4d8bf" stroke-width="1.3"/></svg>
</body></html>
